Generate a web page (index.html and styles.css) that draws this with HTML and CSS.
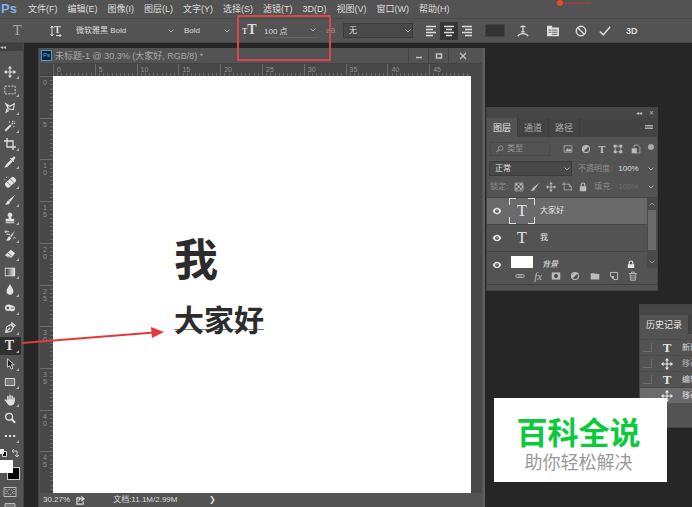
FILE: index.html
```html
<!DOCTYPE html>
<html lang="zh-CN">
<head>
    <meta charset="UTF-8">
    <meta name="viewport" content="width=device-width, initial-scale=1.0">
    <title>未标题-1 - Ps</title>
    <link rel="stylesheet" href="styles.css">
</head>
<body>
    <!-- Shared icons -->
    <svg class="sprite" aria-hidden="true">
        <symbol id="move" viewBox="0 0 14 14"><path d="M7 1v12M1 7h12" stroke="currentColor" stroke-width="1.3"/><path d="M7 0l2.5 3h-5zM7 14l2.5-3h-5zM0 7l3-2.5v5zM14 7l-3-2.5v5z" fill="currentColor"/></symbol>
        <symbol id="marquee" viewBox="0 0 14 14"><rect x="1" y="2.5" width="12" height="9" fill="none" stroke="currentColor" stroke-dasharray="2.5 1.3"/></symbol>
        <symbol id="lasso" viewBox="0 0 14 14"><path d="M2 2l5 3 5-3-1 7-6-1zM5 8c-3 0-3 3-1 3s1-2-1-1l-1 3M4 3l1 5" fill="none" stroke="currentColor" stroke-width="1.2"/></symbol>
        <symbol id="wand" viewBox="0 0 14 14"><path d="M1.500 12.500L8 6" stroke="currentColor" stroke-width="2.200"/><path d="M9 5l1.500-1.500M10 1v1.500M13 4h-1.500M12.500 1.500l-1 1M6 2l1 1M12 8l-1-1" stroke="currentColor" stroke-width="1.200"/></symbol>
        <symbol id="crop" viewBox="0 0 14 14"><path d="M3.500 0v10.500H14M0 3.500h10.500V14" fill="none" stroke="currentColor" stroke-width="1.500"/></symbol>
        <symbol id="dropper" viewBox="0 0 14 14"><path d="M8 5.500L3 10.500 2 12.500 4 11.500 9 6.500z" fill="none" stroke="currentColor" stroke-width="1.500"/><path d="M7 3l4 4 1-1-1-1 2-2c1-1-1-3-2-2L9 3 8 2z" fill="currentColor"/></symbol>
        <symbol id="heal" viewBox="0 0 14 14"><g transform="rotate(-42 8 7)"><rect x="0.500" y="3.500" width="14" height="7" rx="2.500" fill="currentColor"/><path d="M5 4v6M10 4v6" stroke="#777"/></g><path d="M1 5V3M2.500 1.500H5" stroke="currentColor" stroke-dasharray="1 1"/></symbol>
        <symbol id="brush" viewBox="0 0 14 14"><path d="M13 1L5.500 7l2 2zM5.500 7.500C3 7.500 4 10.500 1 12c3 1 6 0 6-3z" fill="currentColor"/></symbol>
        <symbol id="stamp" viewBox="0 0 14 14"><path d="M5.500 5.500a2.600 2.600 0 1 1 3 0V8H12v3H2V8h3.500zM2 12h10v1H2z" fill="currentColor"/></symbol>
        <symbol id="history-brush" viewBox="0 0 14 14"><path d="M13 1L7 7l1.500 1.500zM6.500 7.500C4 7.500 5 10.500 2 12c3 1 6 0 6-3z" fill="currentColor"/><path d="M1 2h5M1 2l2-2M1 2l2 2M3 5h4M11 10c1-2 2-2 2 0" fill="none" stroke="currentColor"/></symbol>
        <symbol id="eraser" viewBox="0 0 14 14"><path d="M8 2l5 4-4 5H4L1 8.500z" fill="currentColor"/><path d="M4.500 5.500l4.500 4" stroke="#535353"/><path d="M2 9l2 1.500h3" stroke="#535353" fill="none"/></symbol>
        <symbol id="gradient" viewBox="0 0 14 14"><linearGradient id="fade"><stop stop-color="#333"/><stop offset="1" stop-color="#eee"/></linearGradient><rect x="1.500" y="2.500" width="11" height="9" fill="url(#fade)" stroke="currentColor"/></symbol>
        <symbol id="drop" viewBox="0 0 14 14"><path d="M7 0c1 3 4 5 4 8.500a4 4 0 0 1-8 0C3 5 6 3 7 0z" fill="currentColor"/></symbol>
        <symbol id="sponge" viewBox="0 0 14 14"><path d="M1 7c0-4 5-5 8-3 4 0 5 3 3 6-2 2-5 0-5 0-3 1-6 0-6-3z" fill="currentColor"/><circle cx="4.500" cy="7" r="1.500" fill="#535353"/><path d="M8 7h4" stroke="#535353"/></symbol>
        <symbol id="pen" viewBox="0 0 14 14"><path d="M2 12l1-6 5-3 3 3-3 5zM2 12l4-4M8 2l4 4" fill="none" stroke="currentColor" stroke-width="1.300"/><path d="M9 0l5 4-1 1-5-4z" fill="currentColor"/><circle cx="6.500" cy="7.500" r="1" fill="currentColor"/></symbol>
        <symbol id="arrow" viewBox="0 0 14 14"><path d="M4 1v10l2.500-2 2 4 2-1-2-4H12z" fill="#222" stroke="currentColor"/></symbol>
        <symbol id="rect" viewBox="0 0 14 14"><rect x="1.500" y="3" width="11" height="8" fill="#777" stroke="currentColor"/></symbol>
        <symbol id="hand" viewBox="0 0 14 14"><path d="M4.500 8V3M7 7V1.500M9.500 7.500V2.500M11.700 8V4.500M1.500 7L4.500 10" stroke="currentColor" stroke-width="1.700" stroke-linecap="round"/><path d="M3.700 6.500h8.800c0 4-1 7-4.500 7-3 0-4-2-5-4z" fill="currentColor"/></symbol>
        <symbol id="search" viewBox="0 0 14 14"><circle cx="6" cy="5.500" r="4" fill="none" stroke="currentColor" stroke-width="1.500"/><path d="M9 8.500l4 4" stroke="currentColor" stroke-width="2.200"/></symbol>
        <symbol id="dots" viewBox="0 0 14 14"><path d="M1 7h12" stroke="currentColor" stroke-width="2.500" stroke-dasharray="2.500 2.250"/></symbol>
        <symbol id="chevron" viewBox="0 0 8 8"><path d="M1.500 2.500L4 5l2.500-2.500" fill="none" stroke="currentColor"/></symbol>
        <symbol id="eye" viewBox="0 0 14 14"><path d="M1 7c3-6 9-6 12 0-3 6-9 6-12 0z" fill="currentColor"/><circle cx="7" cy="7" r="2.600" fill="#484848"/><circle cx="7" cy="6.500" r=".8" fill="currentColor"/></symbol>
        <symbol id="picture" viewBox="0 0 14 14"><path d="M1.500 2.500h11v9h-11z" fill="none" stroke="currentColor"/><path d="M3 10l3-4 2 2 2-2 2 4z" fill="currentColor"/></symbol>
        <symbol id="adjust" viewBox="0 0 14 14"><circle cx="7" cy="7" r="5" fill="none" stroke="currentColor" stroke-width="1.500"/><path d="M3.500 10.500L10.500 3.500A5 5 0 0 0 3.500 10.500z" fill="currentColor"/></symbol>
        <symbol id="shape" viewBox="0 0 14 14"><path d="M3 3h8v8H3z" fill="none" stroke="currentColor"/><path d="M1 1h4v4H1zM9 1h4v4H9zM1 9h4v4H1zM9 9h4v4H9z" fill="currentColor"/></symbol>
        <symbol id="smart" viewBox="0 0 14 14"><path d="M4.500 5V1.500h5l3 3v8h-5" fill="none" stroke="currentColor"/><path d="M1 6h7v7H1z" fill="currentColor"/></symbol>
        <symbol id="checker" viewBox="0 0 14 14"><path d="M1.500 1.500h11v11h-11z" fill="none" stroke="currentColor"/><path d="M2 2h3v3H2zM8 2h3v3H8zM5 5h3v3H5zM11 5h2v3h-2zM2 8h3v3H2zM8 8h3v3H8z" fill="currentColor"/></symbol>
        <symbol id="artboard" viewBox="0 0 14 14"><path d="M0 3h10l3 3v6M3 0v11h11M10 3v3h3" fill="none" stroke="currentColor"/></symbol>
        <symbol id="lock" viewBox="0 0 14 14"><path d="M4.500 7V4a2.500 2.500 0 0 1 5 0v3" fill="none" stroke="currentColor" stroke-width="1.500"/><path d="M2.500 6h9v7h-9z" fill="currentColor"/></symbol>
        <symbol id="link" viewBox="0 0 14 14"><path d="M7 5H3a2 2 0 0 0 0 4h4M7 5h4a2 2 0 0 1 0 4H7M4 7h6" fill="none" stroke="currentColor" stroke-width="1.200"/></symbol>
        <symbol id="mask" viewBox="0 0 14 14"><path d="M1 2h12v10H1z" fill="currentColor"/><circle cx="7" cy="7" r="2.800" fill="#484848"/></symbol>
        <symbol id="folder" viewBox="0 0 14 14"><path d="M1 3h5l1 1h6v8H1z" fill="currentColor"/></symbol>
        <symbol id="new" viewBox="0 0 14 14"><path d="M2 2h10v10H7L2 7z" fill="none" stroke="currentColor" stroke-width="1.400"/><path d="M2 7h5v5z" fill="currentColor"/></symbol>
        <symbol id="trash" viewBox="0 0 14 14"><path d="M1.500 3.500h11M5 3V1.500h4V3M3 4l.5 9h7L11 4M5.500 5v7M8.500 5v7" fill="none" stroke="currentColor" stroke-width="1.200"/></symbol>
        <symbol id="align-left" viewBox="0 0 12 12"><path d="M1 1.500h10M1 4.500h7M1 7.500h10M1 10.500h7" stroke="currentColor" stroke-width="1.500"/></symbol>
        <symbol id="align-center" viewBox="0 0 12 12"><path d="M1 1.500h10M3 4.500h6M1 7.500h10M3 10.500h6" stroke="currentColor" stroke-width="1.500"/></symbol>
        <symbol id="align-right" viewBox="0 0 12 12"><path d="M1 1.500h10M4 4.500h7M1 7.500h10M4 10.500h7" stroke="currentColor" stroke-width="1.500"/></symbol>
    </svg>

    <nav class="menubar">
        <span class="logo">Ps</span>
        <a href="#">文件(F)</a>
        <a href="#">编辑(E)</a>
        <a href="#">图像(I)</a>
        <a href="#">图层(L)</a>
        <a href="#">文字(Y)</a>
        <a href="#">选择(S)</a>
        <a href="#">滤镜(T)</a>
        <a href="#">3D(D)</a>
        <a href="#">视图(V)</a>
        <a href="#">窗口(W)</a>
        <a href="#">帮助(H)</a>
    </nav>

    <div class="options">
        <span class="tool-name">T</span>
        <button class="orient" aria-label="切换文本取向"><svg viewBox="0 0 12 12"><path d="M2 1v10M.5 3L2 1l1.500 2M.5 9L2 11l1.500-2M6 10.500h5M9.500 9l1.500 1.500-1.500 1.500" fill="none" stroke="currentColor"/></svg><b>T</b></button>
        <label class="field family"><select aria-label="字体"><option>微软雅黑 Bold</option></select><svg><use href="#chevron"/></svg></label>
        <label class="field weight"><select aria-label="字体样式"><option>Bold</option></select><svg><use href="#chevron"/></svg></label>
        <label class="size-icon" for="size"><small>T</small>T</label>
        <label class="field size"><input id="size" type="text" value="100 点"><svg><use href="#chevron"/></svg></label>
        <label class="aa-icon" for="aa">a<small>a</small></label>
        <label class="field aa"><select id="aa"><option>无</option></select><svg><use href="#chevron"/></svg></label>
        <div class="aligns">
            <button aria-label="左对齐"><svg><use href="#align-left"/></svg></button>
            <button class="active" aria-label="居中对齐"><svg><use href="#align-center"/></svg></button>
            <button aria-label="右对齐"><svg><use href="#align-right"/></svg></button>
        </div>
        <button class="swatch" aria-label="文本颜色"></button>
        <div class="actions">
            <button aria-label="变形文字"><svg viewBox="0 0 14 14"><path d="M4 2.500c2-1.500 4-1.500 6 0M7 2v6M5 8h4M1 13c2-4 10-4 12 0" fill="none" stroke="currentColor" stroke-width="1.400"/></svg></button>
            <button class="wide" aria-label="字符面板"><svg viewBox="0 0 14 14"><path d="M0 1h6v2h8v10H0z" fill="currentColor"/><path d="M2 6h3M6 6h6M2 8.500h3M6 8.500h6M6 11h6" stroke="#535353"/></svg></button>
            <button aria-label="取消"><svg viewBox="0 0 14 14"><circle cx="7" cy="7" r="5.500" fill="none" stroke="currentColor" stroke-width="1.700"/><path d="M3 3l8 8" stroke="currentColor" stroke-width="1.700"/></svg></button>
            <button aria-label="提交"><svg viewBox="0 0 14 14"><path d="M1 7.500l4 4L13 2" fill="none" stroke="currentColor" stroke-width="1.700"/></svg></button>
            <button class="three-d">3D</button>
        </div>
    </div>

    <main class="workspace">
        <aside class="toolbox">
            <div class="collapse">◂◂</div>
            <div class="tools">
                <button aria-label="移动"><svg><use href="#move"/></svg></button>
                <button aria-label="选框"><svg><use href="#marquee"/></svg></button>
                <button aria-label="套索"><svg><use href="#lasso"/></svg></button>
                <button aria-label="魔棒"><svg><use href="#wand"/></svg></button>
                <button aria-label="裁剪"><svg><use href="#crop"/></svg></button>
                <button aria-label="吸管"><svg><use href="#dropper"/></svg></button>
            </div>
            <div class="tools">
                <button aria-label="修复画笔"><svg><use href="#heal"/></svg></button>
                <button aria-label="画笔"><svg><use href="#brush"/></svg></button>
                <button aria-label="图章"><svg><use href="#stamp"/></svg></button>
                <button aria-label="历史记录画笔"><svg><use href="#history-brush"/></svg></button>
                <button aria-label="橡皮擦"><svg><use href="#eraser"/></svg></button>
                <button aria-label="渐变"><svg><use href="#gradient"/></svg></button>
                <button aria-label="模糊"><svg><use href="#drop"/></svg></button>
                <button aria-label="海绵"><svg><use href="#sponge"/></svg></button>
            </div>
            <div class="tools">
                <button aria-label="钢笔"><svg><use href="#pen"/></svg></button>
                <button class="active" aria-label="文字"><span class="glyph">T</span></button>
                <button aria-label="路径选择"><svg><use href="#arrow"/></svg></button>
                <button aria-label="矩形"><svg><use href="#rect"/></svg></button>
                <button aria-label="抓手"><svg><use href="#hand"/></svg></button>
                <button class="plain" aria-label="缩放"><svg><use href="#search"/></svg></button>
                <button aria-label="更多"><svg><use href="#dots"/></svg></button>
            </div>
            <div class="color-tools">
                <svg viewBox="0 0 20 10"><path d="M2.500 3.500h4v5h-4z" fill="#111" stroke="#ddd"/><path d="M0 1h4v5H0z" fill="#eee"/><path d="M12 3h5v5M14 1l-2 2 2 2M15 7l2 2 2-2" fill="none" stroke="#ccc"/></svg>
            </div>
            <div class="colors"><span class="back"></span><span class="front"></span></div>
            <button class="quick-mask" aria-label="快速蒙版"><svg viewBox="0 0 14 12"><path d="M1 1.500h12v9H1z" fill="none" stroke="currentColor"/><circle cx="7" cy="6" r="2.500" fill="none" stroke="currentColor" stroke-dasharray="1.500 1"/><path d="M3 3v6M11 3v6" stroke="currentColor" stroke-dasharray="1 1"/></svg></button>
            <button class="quick-mask" aria-label="屏幕模式"><svg viewBox="0 0 14 12"><path d="M2 1.500h10v8H2z" fill="#777" stroke="currentColor"/></svg></button>
        </aside>

        <section class="document">
            <header class="titlebar">
                <span class="doc-icon">Ps</span>
                <h1>未标题-1 @ 30.3% (大家好, RGB/8) *</h1>
                <div class="window-buttons">
                    <button aria-label="最小化"><svg viewBox="0 0 8 8"><path d="M1 5.500h6" stroke="currentColor" stroke-width="1.500"/></svg></button>
                    <button aria-label="最大化"><svg viewBox="0 0 8 8"><path d="M1.500 2h5v4h-5z" fill="none" stroke="currentColor" stroke-width="1.500"/></svg></button>
                    <button class="close" aria-label="关闭"><svg viewBox="0 0 8 8"><path d="M1 1l6 6M7 1L1 7" stroke="currentColor" stroke-width="1.300"/></svg></button>
                </div>
            </header>
            <div class="page">
                <div class="corner"></div>
                <div class="ruler top">
                    <span>0</span><span>5</span><span>10</span><span>15</span><span>20</span><span>25</span><span>30</span><span>35</span><span>40</span><span>45</span>
                </div>
                <div class="ruler side">
                    <span>0</span><span>5</span><span>10</span><span>15</span><span>20</span><span>25</span><span>30</span><span>35</span><span>40</span><span>45</span>
                </div>
                <div class="canvas">
                    <p class="first">我</p>
                    <p class="second">大家好</p>
                </div>
            </div>
            <footer class="status">
                <span class="zoom">30.27%</span>
                <svg viewBox="0 0 10 10"><path d="M5 2H1v7h7V6M3 6c0-3 2-3 5-3M6 .5L9 3 6 5.500" fill="none" stroke="currentColor" stroke-width="1.300"/></svg>
                <span class="doc-size">文档:11.1M/2.99M</span>
                <span>❯</span>
            </footer>
        </section>

        <section class="panel layers">
            <div class="panel-top"><span>◂◂</span><span>✕</span></div>
            <div class="tabs">
                <button class="active">图层</button>
                <button>通道</button>
                <button>路径</button>
                <span class="panel-menu"></span>
            </div>
            <div class="filter">
                <label class="kind"><svg><use href="#search"/></svg><input type="text" value="类型" aria-label="类型"></label>
                <svg><use href="#picture"/></svg>
                <svg><use href="#adjust"/></svg>
                <span class="glyph">T</span>
                <svg><use href="#shape"/></svg>
                <svg><use href="#smart"/></svg>
                <span class="dot"></span>
            </div>
            <div class="blend">
                <label class="field mode"><select aria-label="混合模式"><option>正常</option></select><svg><use href="#chevron"/></svg></label>
                <label class="dim" for="opacity">不透明度:</label>
                <label class="field percent"><input id="opacity" type="text" value="100%"><svg><use href="#chevron"/></svg></label>
            </div>
            <div class="locks">
                <span class="dim">锁定:</span>
                <svg><use href="#checker"/></svg>
                <svg><use href="#brush"/></svg>
                <svg><use href="#move"/></svg>
                <svg><use href="#artboard"/></svg>
                <svg><use href="#lock"/></svg>
                <label class="dim" for="fill">填充:</label>
                <label class="field percent off"><input id="fill" type="text" value="100%"><svg><use href="#chevron"/></svg></label>
            </div>
            <div class="layer-list">
                <ul>
                    <li class="active"><svg><use href="#eye"/></svg><span class="thumb selected">T</span>大家好</li>
                    <li><svg><use href="#eye"/></svg><span class="thumb">T</span>我</li>
                    <li class="background"><svg><use href="#eye"/></svg><span class="thumb paper"></span><i>背景</i><svg class="locked"><use href="#lock"/></svg></li>
                </ul>
                <div class="scrollbar"><svg class="up"><use href="#chevron"/></svg><span></span><svg><use href="#chevron"/></svg></div>
            </div>
            <div class="layer-actions">
                <button aria-label="链接图层"><svg><use href="#link"/></svg></button>
                <button class="fx">fx</button>
                <button aria-label="蒙版"><svg><use href="#mask"/></svg></button>
                <button aria-label="调整图层"><svg><use href="#adjust"/></svg></button>
                <button aria-label="新建组"><svg><use href="#folder"/></svg></button>
                <button aria-label="新建图层"><svg><use href="#new"/></svg></button>
                <button aria-label="删除"><svg><use href="#trash"/></svg></button>
            </div>
        </section>

        <section class="panel history">
            <div class="panel-top"></div>
            <div class="tabs"><button class="active">历史记录</button></div>
            <ul>
                <li><span class="box"></span><span class="glyph">T</span>新建</li>
                <li class="faded"><span class="box"></span><svg><use href="#move"/></svg>移动</li>
                <li><span class="box"></span><span class="glyph">T</span>编辑</li>
                <li class="active"><span class="box"></span><svg><use href="#move"/></svg>移动</li>
            </ul>
        </section>

        <div class="watermark">
            <strong>百科全说</strong>
            <span>助你轻松解决</span>
        </div>
    </main>

    <!-- Annotations over the screen -->
    <div class="highlight"></div>
    <svg class="pointer" viewBox="0 0 144 20"><path d="M0 16L132 5.500" stroke="#e03a3c" stroke-width="2"/><path d="M129 0l13 5-12 6z" fill="#e8383b"/></svg>
    <svg class="marker" viewBox="0 0 40 8"><path d="M4 3h30" stroke="#b23c33" stroke-width="1"/><circle cx="4" cy="3" r="3" fill="#e84a2e"/></svg>
</body>
</html>
```
FILE: styles.css
```css
* {
    box-sizing: border-box;
}
body {
    margin: 0;
    height: 100vh;
    display: flex;
    flex-direction: column;
    overflow: hidden;
    background-color: #262626;
    color: #dcdcdc;
    font-family: "Liberation Sans", "Noto Sans CJK SC", sans-serif;
    font-size: 9px;
    line-height: 12px;
}
h1, p, ul {
    margin: 0;
    padding: 0;
    list-style: none;
    font-weight: normal;
}
button, input, select {
    margin: 0;
    padding: 0;
    border: none;
    background: none;
    color: inherit;
    font: inherit;
    appearance: none;
}
button {
    display: flex;
    align-items: center;
    justify-content: center;
}
a {
    color: inherit;
    text-decoration: none;
}
svg {
    flex-shrink: 0;
}
.sprite {
    position: absolute;
    width: 0;
    height: 0;
}
.glyph {
    font-family: "Liberation Serif", serif;
    font-weight: bold;
}

/* Menu */
.menubar {
    display: flex;
    align-items: center;
    height: 18px;
    flex-shrink: 0;
    gap: 10px;
    padding-left: 1px;
    background-color: #535353;
    white-space: nowrap;
}
.logo {
    width: 17px;
    color: #7db4e8;
    font-size: 13px;
    font-weight: bold;
}

/* Options bar */
.options {
    display: flex;
    align-items: center;
    height: 25px;
    flex-shrink: 0;
    padding-left: 13px;
    background-color: #535353;
    border-top: 1px solid #4a4a4a;
    border-bottom: 1px solid #484848;
    font-size: 8px;
}
.tool-name {
    width: 36px;
    color: #aaa;
    font-family: "Liberation Serif", serif;
    font-size: 14px;
}
.orient {
    width: 14px;
    position: relative;
}
.orient svg {
    width: 12px;
    height: 12px;
}
.orient b {
    position: absolute;
    left: 5px;
    top: -1px;
    font-family: "Liberation Serif", serif;
    font-size: 10px;
}
.field {
    display: flex;
    align-items: center;
    height: 15px;
}
.field svg {
    width: 8px;
    height: 8px;
    color: #aaa;
}
.field input, .field select {
    flex: 1;
    min-width: 0;
    height: 14px;
}
.family {
    width: 99px;
    margin-left: 13px;
}
.weight {
    width: 47px;
    margin-left: 9px;
}
.size-icon {
    width: 22px;
    margin-left: 11px;
    font: bold 14px/14px "Liberation Serif", serif;
}
.size-icon small {
    font-size: 8px;
}
.size {
    width: 53px;
    border-bottom: 1px solid #646464;
}
.aa-icon {
    width: 17px;
    margin-left: 9px;
    color: #8c8c8c;
}
.aa-icon small {
    font-size: 9px;
}
.aa {
    width: 70px;
    padding-left: 5px;
    border: 1px solid #3c3c3c;
    background-color: #494949;
}
.aligns {
    display: flex;
    margin-left: 9px;
}
.aligns button {
    width: 18px;
    height: 18px;
}
.aligns .active {
    background-color: #363636;
}
.aligns svg {
    width: 12px;
    height: 12px;
}
.swatch {
    width: 20px;
    height: 13px;
    margin-left: 9px;
    background-color: #333;
    border: 1px solid #444;
}
.actions {
    display: flex;
    gap: 12px;
    margin-left: 12px;
}
.actions svg {
    width: 12px;
    height: 12px;
}
.actions .wide {
    margin: 0 4px 0 6px;
}
.actions .three-d {
    margin-left: 3px;
    font-size: 9px;
    font-weight: bold;
}

/* Toolbox */
.workspace {
    position: relative;
    flex: 1;
    min-height: 0;
    display: flex;
    overflow: hidden;
}
.toolbox {
    width: 24px;
    background-color: #535353;
    border-right: 1px solid #444;
}
.collapse {
    height: 8px;
    margin-bottom: 12px;
    background-color: #3e3e3e;
    color: #bbb;
    font-size: 6px;
    line-height: 8px;
}
.tools {
    margin-bottom: 2px;
}
.tools button {
    position: relative;
    width: 21px;
    height: 18px;
    padding-right: 2px;
    color: #e2e2e2;
}
.tools button::after {
    content: "";
    position: absolute;
    right: 2px;
    bottom: 2px;
    border-left: 3px solid transparent;
    border-bottom: 3px solid #aaa;
}
.tools .plain::after {
    display: none;
}
.tools .active {
    background-color: #303030;
}
.tools svg {
    width: 12px;
    height: 12px;
}
.tools .glyph {
    font-size: 14px;
}
.color-tools {
    height: 13px;
    padding-top: 1px;
}
.color-tools svg {
    display: block;
    width: 20px;
    height: 10px;
}
.colors {
    position: relative;
    height: 24px;
}
.colors span {
    position: absolute;
    width: 13px;
    height: 13px;
}
.colors .front {
    left: 0;
    top: 0;
    background-color: #fff;
}
.colors .back {
    left: 7px;
    top: 7px;
    background-color: #000;
    border: 1px solid #ccc;
}
.quick-mask {
    width: 19px;
    height: 16px;
    color: #bbb;
}
.quick-mask svg {
    width: 14px;
    height: 12px;
}

/* Document window */
.document {
    position: absolute;
    left: 38px;
    right: 207px;
    top: 5px;
    bottom: 0;
    display: flex;
    flex-direction: column;
    padding: 0 1px;
    background-color: #535353;
    border-left: 1px solid #444;
    border-right: 2px solid #606060;
}
.titlebar {
    display: flex;
    align-items: center;
    height: 16px;
    padding-left: 1px;
    gap: 3px;
    border-bottom: 1px solid #444;
    color: #a8a8a8;
}
.titlebar h1 {
    flex: 1;
    font-size: 9px;
    white-space: nowrap;
}
.doc-icon {
    width: 11px;
    height: 11px;
    border: 1px solid #4d9ad4;
    background-color: #0a2338;
    color: #63b4ec;
    font-size: 6px;
    line-height: 9px;
    text-align: center;
}
.window-buttons {
    display: flex;
    height: 15px;
    padding-right: 5px;
}
.window-buttons button {
    width: 20px;
    border-left: 1px solid #464646;
}
.window-buttons .close {
    width: 29px;
}
.window-buttons svg {
    width: 8px;
    height: 8px;
    color: #c0c0c0;
}
.page {
    flex: 1;
    min-height: 0;
    display: grid;
    grid-template-columns: 13px 1fr;
    grid-template-rows: 12px 1fr;
    padding-right: 11px;
    background-color: #484848;
}
.corner {
    border-right: 1px solid #3c3c3c;
    border-bottom: 1px solid #3c3c3c;
}
.ruler {
    display: grid;
    min-height: 0;
    color: #909090;
    font-size: 7px;
    line-height: 7px;
}
.ruler.top {
    grid-template-columns: repeat(10, 1fr);
    background: repeating-linear-gradient(to right, #6c6c6c 0 1px, transparent 1px 1%) bottom / 100% 3px no-repeat;
}
.ruler.side {
    grid-template-rows: repeat(10, 1fr);
    background: repeating-linear-gradient(to bottom, #6c6c6c 0 1px, transparent 1px 1%) right / 3px 100% no-repeat;
}
.ruler.top span {
    padding: 2px 0 0 3px;
    border-left: 1px solid #6c6c6c;
}
.ruler.side span {
    width: 13px;
    padding: 2px 4px 0 3px;
    border-top: 1px solid #6c6c6c;
    word-break: break-all;
}
.canvas {
    padding: 157px 0 0 121px;
    background-color: #fff;
    color: #2c2c2c;
    font-family: "Noto Sans CJK SC", sans-serif;
}
.canvas p {
    font-weight: bold;
    white-space: nowrap;
}
.canvas .first {
    font-size: 44px;
    line-height: 48px;
}
.canvas .second {
    width: 90px;
    margin-top: 22px;
    font-size: 30px;
    line-height: 30px;
    background: linear-gradient(#777, #777) 0 26px / 100% 1px no-repeat;
}
.status {
    display: flex;
    align-items: center;
    height: 14px;
    padding-left: 3px;
    font-size: 8px;
    white-space: nowrap;
}
.status svg {
    width: 9px;
    height: 9px;
    margin-left: 6px;
}
.doc-size {
    width: 96px;
    margin-left: 28px;
}

/* Floating panels */
.panel {
    position: absolute;
    background-color: #535353;
    border: 1px solid #444;
    font-size: 8px;
}
.panel-top {
    display: flex;
    justify-content: flex-end;
    gap: 7px;
    height: 10px;
    padding-right: 3px;
    background-color: #464646;
    font-size: 6px;
    line-height: 10px;
}
.tabs {
    display: flex;
    background-color: #434343;
    color: #aaa;
    font-size: 9px;
}
.tabs button {
    height: 19px;
    padding: 0 6px;
    border-right: 1px solid #3c3c3c;
    white-space: nowrap;
}
.tabs .active {
    background-color: #535353;
    color: #e6e6e6;
}
.panel-menu {
    width: 8px;
    height: 4px;
    margin: 7px 4px 0 auto;
    border-top: 1px solid #aaa;
    border-bottom: 1px solid #aaa;
    background-color: #777;
}
.layers {
    right: 34px;
    top: 64px;
    width: 172px;
    height: 184px;
    color: #bcbcbc;
}
.filter, .blend, .locks {
    display: flex;
    align-items: center;
}
.filter {
    height: 24px;
    padding: 0 3px;
    justify-content: space-between;
}
.filter svg, .locks > svg {
    width: 10px;
    height: 10px;
}
.filter .glyph {
    font-size: 11px;
}
.kind {
    display: flex;
    align-items: center;
    width: 60px;
    height: 14px;
    padding-left: 5px;
    gap: 3px;
    margin-right: 6px;
    border: 1px solid #4a4a4a;
    color: #999;
}
.kind input {
    width: 40px;
}
.filter .kind svg {
    width: 8px;
    height: 8px;
    transform: scaleX(-1);
}
.dot {
    width: 6px;
    height: 6px;
    margin-bottom: 5px;
    border-radius: 50%;
    background-color: #aaa;
}
.dim {
    color: #8c8c8c;
    white-space: nowrap;
}
.blend {
    height: 15px;
    padding: 0 2px;
    gap: 6px;
}
.mode {
    flex-shrink: 0;
    width: 83px;
    padding-left: 5px;
    border: 1px solid #3c3c3c;
    background-color: #484848;
    color: #e6e6e6;
}
.percent {
    flex: 1;
    min-width: 0;
    color: #dcdcdc;
}
.percent input {
    width: 20px;
}
.percent.off input {
    color: #6c6c6c;
}
.locks {
    height: 21px;
    padding: 0 2px 0 3px;
    gap: 6px;
}
.layer-list {
    display: flex;
    height: 71px;
    border-top: 1px solid #444;
    overflow: hidden;
}
.layer-list ul {
    flex: 1;
}
.layer-list li {
    display: flex;
    align-items: center;
    height: 27px;
    padding-left: 5px;
    border-bottom: 1px solid #464646;
    color: #e6e6e6;
}
.layer-list li svg {
    width: 10px;
    height: 10px;
}
.layer-list .active {
    background-color: #6a6a6a;
}
.thumb {
    width: 26px;
    height: 26px;
    margin: 0 5px 0 7px;
    font: 16px/25px "Liberation Serif", serif;
    text-align: center;
}
/* four corner marks around the selected layer */
.thumb.selected {
    background:
        linear-gradient(to right, #ddd 7px, transparent 7px 19px, #ddd 19px) top / 100% 1px no-repeat,
        linear-gradient(to right, #ddd 7px, transparent 7px 19px, #ddd 19px) bottom / 100% 1px no-repeat,
        linear-gradient(#ddd 7px, transparent 7px 19px, #ddd 19px) left / 1px 100% no-repeat,
        linear-gradient(#ddd 7px, transparent 7px 19px, #ddd 19px) right / 1px 100% no-repeat;
}
.thumb.paper {
    width: 22px;
    height: 18px;
    margin: 0 9px;
    background-color: #fff;
}
.layer-list .locked {
    margin: 0 11px 0 auto;
}
.scrollbar {
    display: flex;
    flex-direction: column;
    align-items: center;
    justify-content: space-between;
    width: 10px;
    padding: 2px 0;
    background-color: #4a4a4a;
    color: #999;
}
.scrollbar svg {
    width: 8px;
    height: 8px;
}
.scrollbar .up {
    transform: rotate(180deg);
}
.scrollbar span {
    width: 8px;
    height: 40px;
    margin-bottom: 6px;
    background-color: #6c6c6c;
}
.layer-actions {
    display: flex;
    justify-content: space-between;
    height: 17px;
    padding: 0 19px 0 28px;
    border-bottom: 1px solid #404040;
}
.layer-actions svg {
    width: 10px;
    height: 10px;
}
.layer-actions .fx {
    font: italic 11px/12px "Liberation Serif", serif;
}
.history {
    right: -40px;
    top: 261px;
    width: 93px;
    height: 124px;
}
.history .tabs {
    margin-bottom: 5px;
}
.history li {
    display: flex;
    align-items: center;
    height: 16px;
    gap: 9px;
    padding-left: 3px;
    border-top: 1px solid #4c4c4c;
    white-space: nowrap;
    overflow: hidden;
}
.history .active {
    background-color: #6a6a6a;
}
.history .tabs .active {
    background-color: #535353;
}
.history .faded {
    color: #b0b0b0;
}
.history svg, .history .glyph {
    width: 12px;
    height: 12px;
    color: #e6e6e6;
    font-size: 13px;
    text-align: center;
}
.box {
    width: 9px;
    height: 9px;
    border-right: 1px solid #6c6c6c;
    border-bottom: 1px solid #6c6c6c;
}
.watermark {
    position: absolute;
    right: 25px;
    bottom: 25px;
    width: 173px;
    height: 84px;
    padding: 14px 4px 0 0;
    display: flex;
    flex-direction: column;
    align-items: center;
    background-color: #fff;
    color: #999;
    font-family: "Noto Sans CJK SC", sans-serif;
    font-size: 18px;
    line-height: 22px;
}
.watermark strong {
    color: #0dc93c;
    font-size: 31px;
    font-weight: bold;
    line-height: 38px;
}

/* Annotations */
.highlight {
    position: absolute;
    left: 237px;
    top: 15px;
    width: 94px;
    height: 46px;
    border: 2px solid #d8474b;
}
.pointer {
    position: absolute;
    left: 22px;
    top: 327px;
    width: 144px;
    height: 20px;
}
.marker {
    position: absolute;
    left: 556px;
    top: 0;
    width: 40px;
    height: 8px;
}
```
